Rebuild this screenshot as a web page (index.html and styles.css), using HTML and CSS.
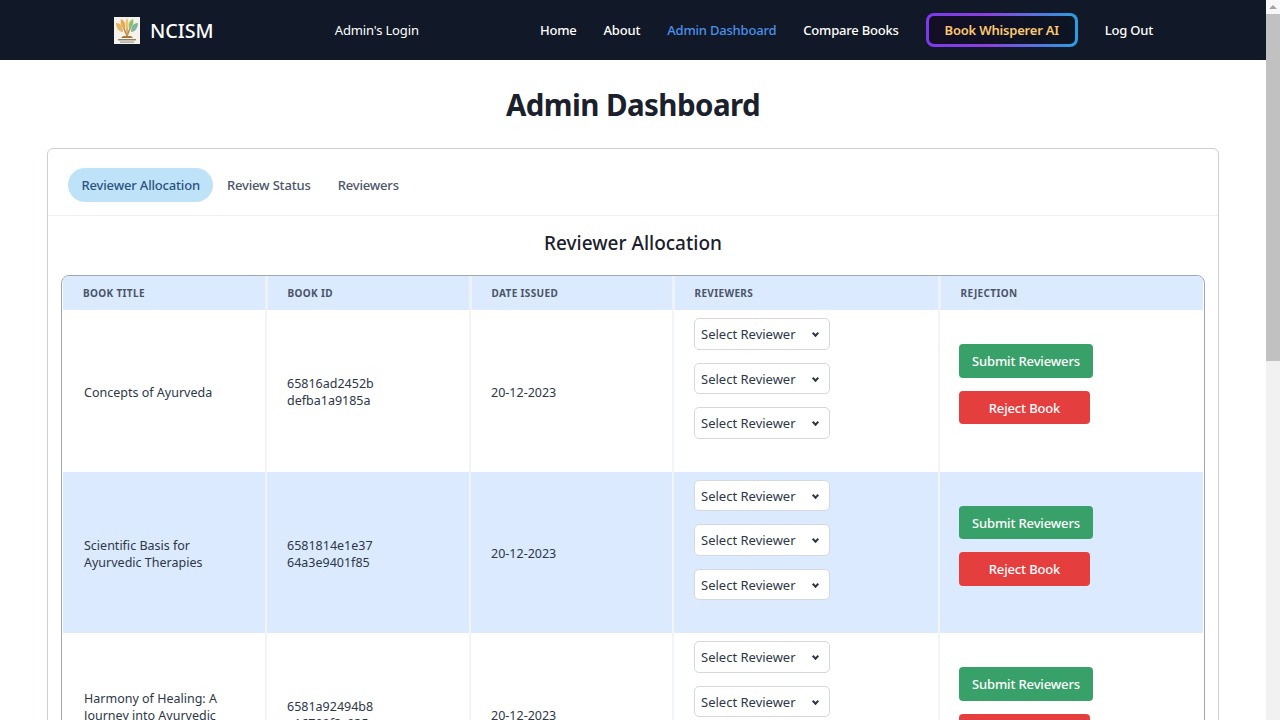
FILE: index.html
```html
<!DOCTYPE html>
<html lang="en">
  <head>
    <title>Admin Dashboard</title>
    <meta charset="utf-8">
    <link rel="stylesheet" href="styles.css">
  </head>
  <body>

  <div class="shell">
    <div class="page">

      <header class="topbar">
        <a class="brand" href="#">
          <svg class="brand-logo" viewBox="0 0 26 27">
            <rect width="26" height="27" fill="#f4f2ea"/>
            <path d="M13 19 L9 9" stroke="#b9863c" stroke-width="1.4" fill="none"/>
            <path d="M13 19 L17 9" stroke="#b9863c" stroke-width="1.4" fill="none"/>
            <path d="M13 19 V7" stroke="#c99a4a" stroke-width="1.4" fill="none"/>
            <path d="M2 6 C7 6 9 10 9 15 C5 15 2 11 2 6 Z" fill="#e3b566"/>
            <path d="M7 2 C11 4 12 8 11 12 C7 10 6 6 7 2 Z" fill="#e9a94f"/>
            <path d="M13 1 C15 4 15 8 13 12 C11 8 11 4 13 1 Z" fill="#f0c46c"/>
            <path d="M19 2 C20 6 19 10 15 12 C14 8 15 4 19 2 Z" fill="#93bf6c"/>
            <path d="M24 6 C24 11 21 15 17 15 C17 10 19 6 24 6 Z" fill="#7fb4a0"/>
            <path d="M9 19 H17 L19 21 H7 Z" fill="#a9763b"/>
            <rect x="4" y="22" width="18" height="1.4" fill="#8c7f6c"/>
            <rect x="6" y="24.5" width="14" height="1.2" fill="#a39a8a"/>
          </svg>
          <span>NCISM</span>
        </a>
        <span class="login-label">Admin's Login</span>
        <nav class="nav">
          <a href="#">Home</a>
          <a href="#">About</a>
          <a href="#" class="current">Admin Dashboard</a>
          <a href="#">Compare Books</a>
          <a href="#" class="whisper">Book Whisperer AI</a>
          <a href="#">Log Out</a>
        </nav>
      </header>

      <main class="content">
        <h1 class="page-title">Admin Dashboard</h1>

        <section class="card">
          <div class="tabs">
            <button class="tab active">Reviewer Allocation</button>
            <button class="tab">Review Status</button>
            <button class="tab">Reviewers</button>
          </div>

          <div class="panel">
            <h2 class="panel-title">Reviewer Allocation</h2>

            <div class="table-wrap">
              <table class="books">
                <thead>
                  <tr>
                    <th>Book Title</th>
                    <th>Book ID</th>
                    <th>Date Issued</th>
                    <th>Reviewers</th>
                    <th>Rejection</th>
                  </tr>
                </thead>
                <tbody>
                  <tr>
                    <td>Concepts of Ayurveda</td>
                    <td>65816ad2452b<br>defba1a9185a</td>
                    <td>20-12-2023</td>
                    <td class="pickers">
                      <div class="select">Select Reviewer</div>
                      <div class="select">Select Reviewer</div>
                      <div class="select">Select Reviewer</div>
                    </td>
                    <td class="actions">
                      <button class="btn submit">Submit Reviewers</button>
                      <button class="btn reject">Reject Book</button>
                    </td>
                  </tr>
                  <tr class="odd">
                    <td>Scientific Basis for<br>Ayurvedic Therapies</td>
                    <td>6581814e1e37<br>64a3e9401f85</td>
                    <td>20-12-2023</td>
                    <td class="pickers">
                      <div class="select">Select Reviewer</div>
                      <div class="select">Select Reviewer</div>
                      <div class="select">Select Reviewer</div>
                    </td>
                    <td class="actions">
                      <button class="btn submit">Submit Reviewers</button>
                      <button class="btn reject">Reject Book</button>
                    </td>
                  </tr>
                  <tr>
                    <td>Harmony of Healing: A<br>Journey into Ayurvedic<br>Medicine</td>
                    <td>6581a92494b8<br>a16790f2c935</td>
                    <td>20-12-2023</td>
                    <td class="pickers">
                      <div class="select">Select Reviewer</div>
                      <div class="select">Select Reviewer</div>
                      <div class="select">Select Reviewer</div>
                    </td>
                    <td class="actions">
                      <button class="btn submit">Submit Reviewers</button>
                      <button class="btn reject">Reject Book</button>
                    </td>
                  </tr>
                </tbody>
              </table>
            </div>
          </div>
        </section>
      </main>

    </div>

    <div class="scrollbar">
      <div class="scroll-up"></div>
      <div class="scroll-thumb"></div>
    </div>
  </div>

  </body>
</html>
```

FILE: styles.css
```css
html, body {
  height: 100%;
}
body {
  margin: 0;
  background: #ffffff;
  color: #1a202c;
  font-family: "Noto Sans", "Open Sans", sans-serif;
  font-size: 13px;
  overflow: hidden;
}

.shell {
  display: flex;
  height: 720px;
  overflow: hidden;
}
.page {
  flex: 1;
  min-width: 0;
}

/* fake window scrollbar */
.scrollbar {
  width: 14px;
  flex: none;
  background: #f1f1f1;
}
.scroll-up {
  height: 14px;
  position: relative;
  background: #f8f8f8;
}
.scroll-up::after {
  content: "";
  position: absolute;
  left: 3px;
  top: 5px;
  border: 4px solid transparent;
  border-top: 0;
  border-bottom: 4px solid #a3a3a3;
}
.scroll-thumb {
  height: 347px;
  background: #c1c1c1;
}

/* top bar */
.topbar {
  height: 60px;
  background: #111827;
  display: flex;
  align-items: center;
  justify-content: space-between;
  padding: 0 113px 0 114px;
  color: #ffffff;
}
.topbar a {
  color: #ffffff;
  text-decoration: none;
}
.brand {
  display: flex;
  align-items: center;
  gap: 10px;
  font-size: 19.7px;
  font-weight: 500;
}
.brand-logo {
  width: 26px;
  height: 27px;
  display: block;
}
.login-label {
  font-size: 13px;
  letter-spacing: -0.15px;
}
.nav {
  display: flex;
  align-items: center;
  gap: 27px;
  font-size: 13px;
  letter-spacing: -0.2px;
  font-weight: 500;
}
.nav .current {
  color: #4a90e8;
}
.nav .whisper {
  width: 152px;
  height: 34px;
  box-sizing: border-box;
  display: flex;
  align-items: center;
  justify-content: center;
  color: #fbc96e;
  font-weight: 600;
  border: 3px solid transparent;
  border-radius: 8px;
  background:
    linear-gradient(90deg, #130e24, #0c1524) padding-box,
    linear-gradient(90deg, #7c3aed 0%, #8b3fe0 40%, #2b9fe0 100%) border-box;
}

/* main */
.content {
  padding: 0 47px;
}
.page-title {
  margin: 0;
  padding-top: 24px;
  height: 64px;
  font-size: 29.5px;
  line-height: 42px;
  font-weight: 700;
  text-align: center;
  letter-spacing: -0.57px;
}

.card {
  border: 1px solid #cbd0d6;
  border-radius: 6px;
  background: #fff;
}
.tabs {
  display: flex;
  padding: 19px 20px 13px;
  border-bottom: 1px solid #edf0f3;
}
.tab {
  height: 34px;
  padding: 0 13.5px;
  border: 0;
  border-radius: 17px;
  background: none;
  color: #4a5568;
  font-family: inherit;
  font-size: 13px;
  letter-spacing: -0.17px;
  font-weight: 500;
}
.tab.active {
  background: #bee3f8;
  color: #2c5282;
}

.panel {
  padding: 0 13px;
}
.panel-title {
  margin: 0;
  height: 59px;
  font-size: 19px;
  line-height: 54px;
  font-weight: 500;
  text-align: center;
}

.table-wrap {
  border: 1px solid #a0a6ae;
  border-radius: 8px;
  overflow: hidden;
  padding-left: 1px;
}
.books {
  width: 1140px;
  table-layout: fixed;
  border-collapse: collapse;
}
.books th {
  height: 34px;
  box-sizing: border-box;
  padding: 0 0 0 20px;
  background: #dbeafe;
  color: #4a5568;
  font-size: 10px;
  font-weight: 700;
  letter-spacing: 0.35px;
  text-align: left;
  text-transform: uppercase;
  border-right: 3px solid #edf2f7;
}
.books th:last-child {
  border-right: 0;
}
.books th:nth-child(1) { width: 203px; }
.books th:nth-child(2) { width: 204px; }
.books th:nth-child(3) { width: 203px; }
.books th:nth-child(4) { width: 266px; }

.books td {
  padding: 3px 20px 0;
  height: 161.5px;
  box-sizing: border-box;
  vertical-align: middle;
  font-size: 12.5px;
  line-height: 17px;
  color: #2d3748;
  border-right: 2px solid #f1f4f8;
}
.books td:first-child {
  padding-left: 21px;
}
.books td:last-child {
  border-right: 0;
}
.books .odd td {
  background: #dbeafe;
}
.books td.pickers {
  padding-top: 8px;
  padding-bottom: 8px;
  vertical-align: top;
}
.select {
  width: 136px;
  height: 31.5px;
  box-sizing: border-box;
  margin-bottom: 13px;
  padding-left: 6px;
  border: 1px solid #d5d9de;
  border-radius: 5px;
  background: #fff;
  font-size: 13px;
  line-height: 31px;
  position: relative;
}
.select::after {
  content: "";
  position: absolute;
  right: 11px;
  top: 12px;
  width: 3px;
  height: 3px;
  border: solid #2d3748;
  border-width: 0 2px 2px 0;
  transform: rotate(45deg);
}

.books td.actions {
  padding: 0 0 0 19px;
}
.actions .btn {
  display: block;
  height: 33.5px;
  margin-bottom: 13px;
  padding: 0;
  border: 0;
  border-radius: 4px;
  color: #fff;
  font-family: inherit;
  font-size: 13px;
  letter-spacing: -0.15px;
  font-weight: 500;
}
.btn.submit {
  width: 134px;
  background: #38a169;
}
.btn.reject {
  width: 131px;
  background: #e53e3e;
}
```
